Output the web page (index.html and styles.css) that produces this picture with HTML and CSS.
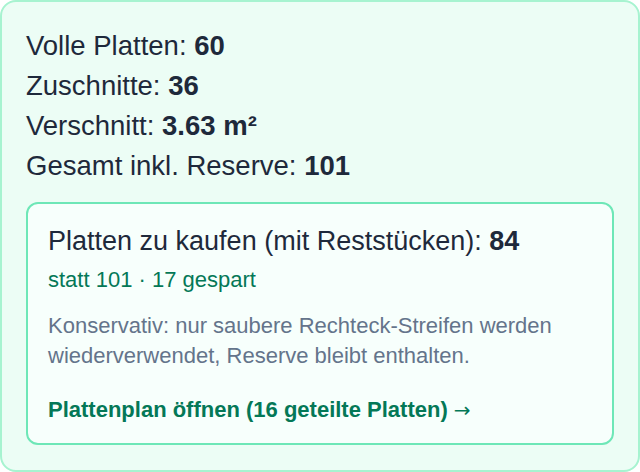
FILE: index.html
```html
<!DOCTYPE html>
<html>
    <head>
        <title>Plattenbedarf</title>
        <link rel="stylesheet" href="styles.css">
    </head>
    <body>
        <!-- Ergebnis-Karte -->
        <section class="result">
            <div class="line">Volle Platten: <b>60</b></div>
            <div class="line">Zuschnitte: <b>36</b></div>
            <div class="line">Verschnitt: <b>3.63 m²</b></div>
            <div class="line">Gesamt inkl. Reserve: <b>101</b></div>

            <!-- Reststuecke -->
            <div class="offcuts">
                <div class="offcuts-title">Platten zu kaufen (mit Reststücken): <b>84</b></div>
                <div class="offcuts-saved">statt 101 · 17 gespart</div>
                <p class="offcuts-note">Konservativ: nur saubere Rechteck-Streifen werden wiederverwendet, Reserve bleibt enthalten.</p>
                <a class="offcuts-link" href="#plan">Plattenplan öffnen (16 geteilte Platten) <span class="arrow">→</span></a>
            </div>
        </section>
    </body>
</html>
```
FILE: styles.css
```css
html, body {
    margin: 0;
    padding: 0;
}
body {
    font-family: "Liberation Sans", Arial, sans-serif;
    color: #1e293b;
    background: #ffffff;
}
.result {
    box-sizing: border-box;
    width: 640px;
    height: 472px;
    padding: 24px 24px;
    background-color: #ecfdf5;
    border: 2px solid #a7f3d0;
    border-radius: 16px;
}
.line {
    font-size: 27.5px;
    line-height: 40px;
}
.offcuts {
    margin-top: 16px;
    padding: 20px 20px 19px;
    background-color: #f7fffc;
    border: 2px solid #6ee7b7;
    border-radius: 12px;
}
.offcuts-title {
    font-size: 27px;
    line-height: 34px;
}
.offcuts-saved {
    margin-top: 8px;
    font-size: 22px;
    line-height: 28px;
    color: #047857;
}
.offcuts-note {
    margin: 17px 0 0;
    font-size: 22px;
    line-height: 30px;
    color: #64748b;
}
.offcuts-link {
    display: block;
    margin-top: 25px;
    font-size: 22px;
    line-height: 28px;
    font-weight: bold;
    color: #047857;
    text-decoration: none;
}
.arrow {
    font-family: "DejaVu Sans", sans-serif;
    font-size: 20px;
    font-weight: normal;
}
```
